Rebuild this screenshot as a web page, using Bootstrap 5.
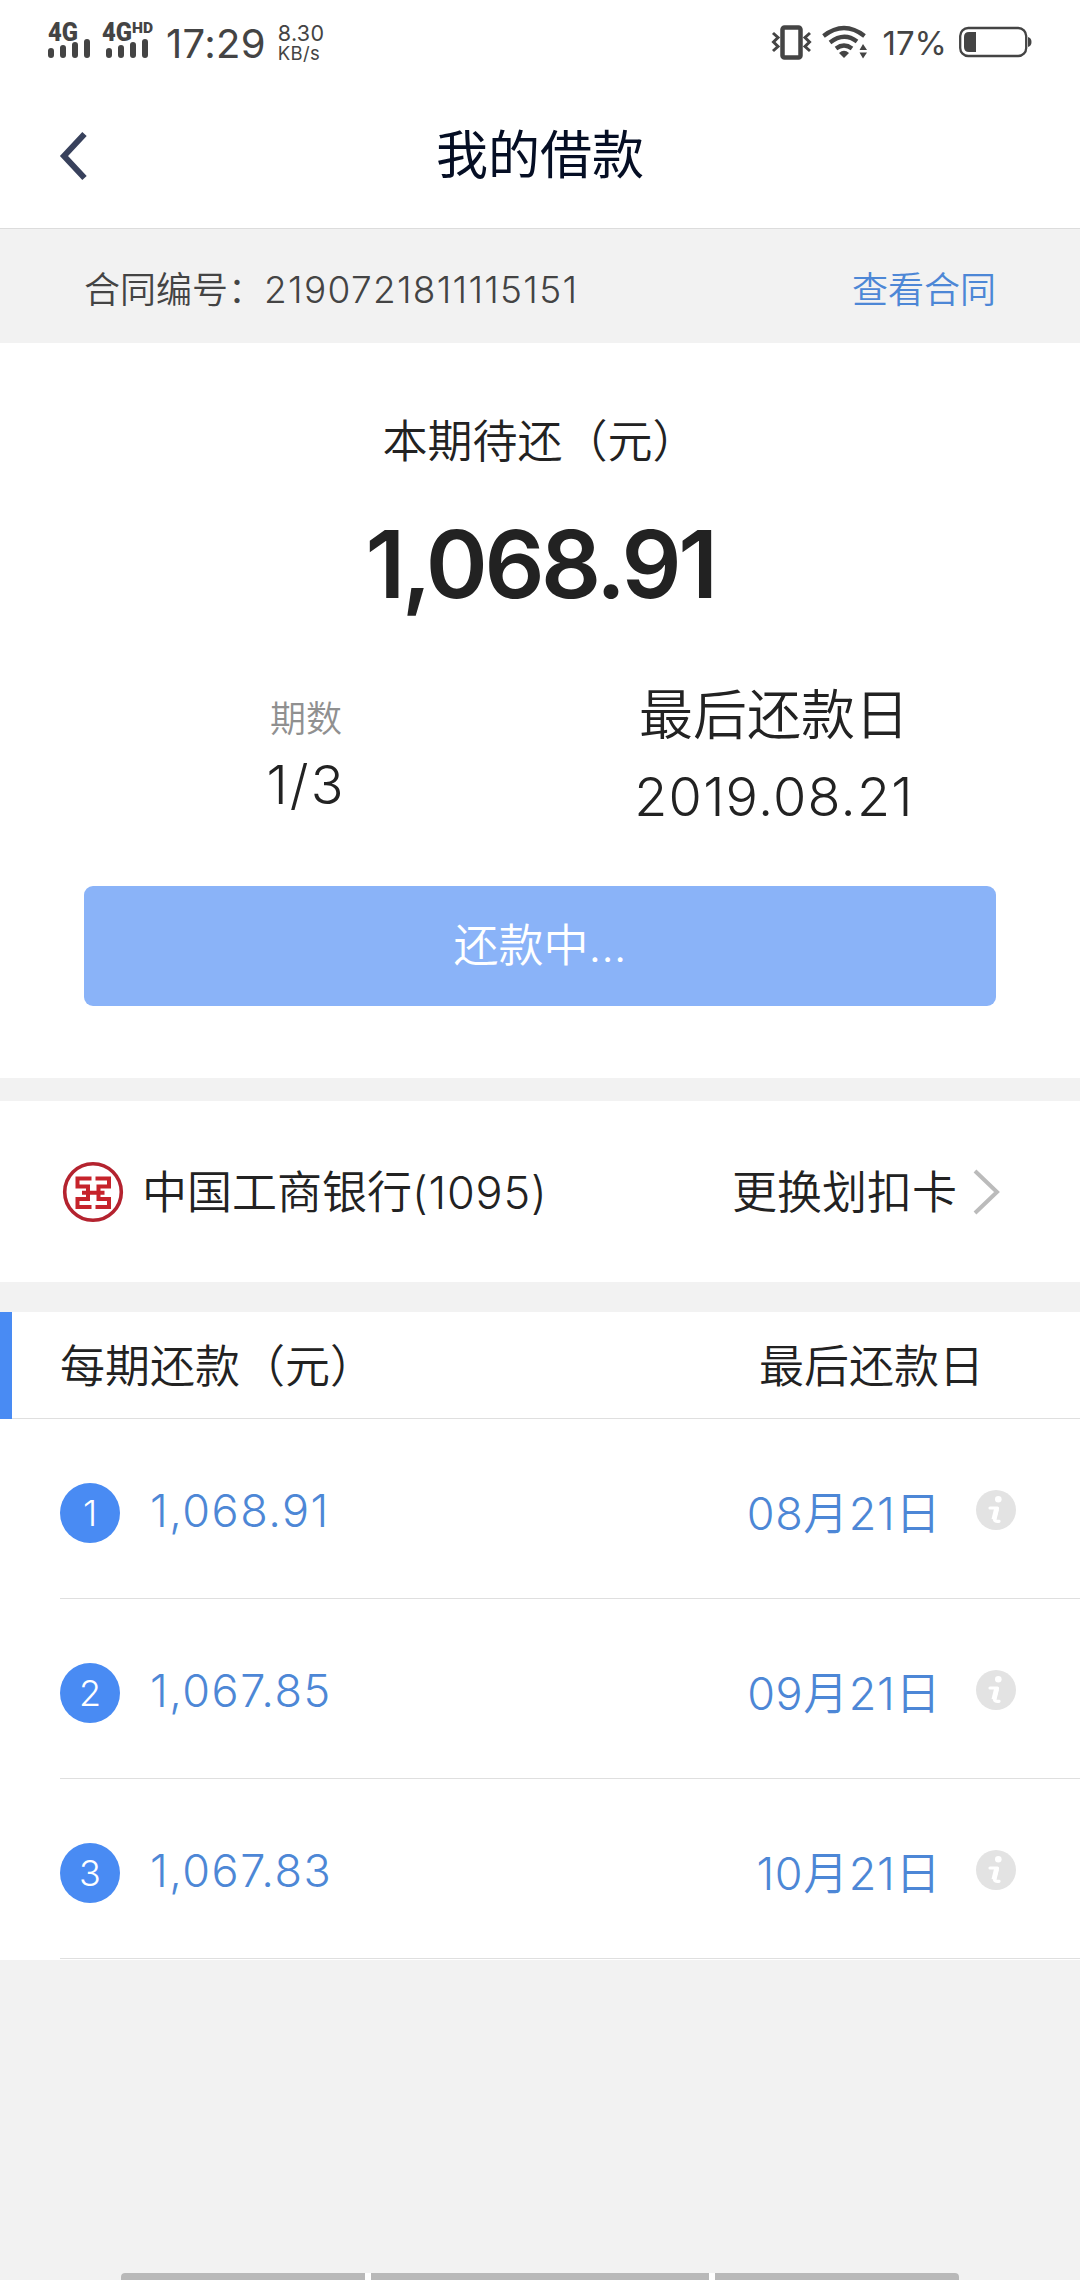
<!DOCTYPE html>
<html lang="zh-CN">
<head>
<meta charset="utf-8">
<meta name="viewport" content="width=device-width, initial-scale=1">
<title>我的借款</title>
<link href="https://cdn.jsdelivr.net/npm/bootstrap@5.3.0/dist/css/bootstrap.min.css" rel="stylesheet">
<style>
body{width:1080px;height:2280px;overflow:hidden;background:#f2f2f2;color:#222;font-family:Inter,"Noto Sans CJK SC",sans-serif;font-weight:350;line-height:1;white-space:nowrap}
svg{display:block;flex:none;overflow:visible}
.status{height:84px;color:#444;padding:23px 48px 0}
.sig{margin-right:12px}
.clock{font-size:40px;font-weight:400;line-height:44px;margin:-1px 0 0 -2px;letter-spacing:.3px}
.speed{font-size:21.5px;font-weight:400;line-height:20px;margin:0 0 0 12px;letter-spacing:.3px}
.speed small{font-size:18.5px;display:block}
.pct{font-size:33px;font-weight:400;line-height:40px;margin:0 11px 0 14px}
.titlebar{height:145px;border-bottom:1px solid #dcdcdc;padding:0 60px}
.titlebar h1{font-size:52px;font-weight:400;color:#050e24;line-height:60px}
.titlebar-end{width:28px}
.contract{height:114px;padding:7px 84px 0;font-size:36px;color:#444}
.contract-no{font-size:37px;letter-spacing:1.3px}
.accent{color:#4d87d6}
.due{height:735px;padding:76px 84px 0}
.due-label{font-size:45px;line-height:46px}
.due-sum{font-size:94px;line-height:96px;font-weight:600;letter-spacing:-3.4px;margin-top:51px}
.plan{margin:77px -24px 0 0;height:197px}
.term{width:444px;padding-top:8px}
.term-label{font-size:36px;line-height:44px;color:#909090;margin-bottom:17px}
.last{width:492px}
.last-date{margin-top:27px;letter-spacing:1.2px}
.f45{font-size:45px}.f54{font-size:54px}
.term .f54{letter-spacing:2px}
.pay{height:120px;border-radius:9px;background:#8ab3f8;color:#fff;font-size:45px;font-weight:350;border:0;padding:0}
.bank{height:181px;margin-top:23px;padding:1px 80px 0 62px}
.bank-name{margin-left:18px}
.bank-name span{letter-spacing:.8px}
.bank-change{margin-right:16px}
.plans{margin-top:30px;padding-bottom:1px}
.plans-head{height:107px;border-left:12px solid #498bf3}
.plans-head>div{height:107px;border-bottom:1px solid #dfdfdf;padding:2px 96px 0 48px;font-size:45px}
.item{height:180px;margin-left:60px;border-bottom:1px solid #dfdfdf;padding:8px 64px 0 0;font-size:45px}
.dot{width:60px;height:60px;background:#498bf3;color:#fff;border-radius:50%;font-size:36px}
.amount{margin:0 0 4px 30px;letter-spacing:1.5px}
.date{margin:1px 35px 0 0;letter-spacing:.6px}
.item svg{margin-bottom:6px}
.navbars{position:fixed;left:121px;bottom:0;width:838px;height:7px;background:#fff;gap:6px;border-radius:4px 4px 0 0;overflow:hidden}
.navbars i{background:#b9b9b9;height:7px}
.navbars i:nth-child(odd){width:244px}
</style>
</head>
<body>
<svg class="d-none">
<symbol id="info" viewBox="0 0 40 40"><circle cx="20" cy="20" r="20" fill="#e3e3e3"/><circle cx="22.300" cy="9.300" r="3.300" fill="#fff"/><path d="M14 18H21.500L18.500 28.500Q18 32 23 31.300" fill="none" stroke="#fff" stroke-width="3.200" stroke-linejoin="round" stroke-linecap="round"/><path d="M20.500 19L18 29.500" stroke="#fff" stroke-width="5"/></symbol>
</svg>
<header class="bg-white">
<div class="status d-flex">
<svg class="sig" width="42" height="37" viewBox="0 0 42 37"><text x="0" y="18" font-family="Roboto" font-weight="900" font-size="25" textLength="30" lengthAdjust="spacingAndGlyphs" fill="#444">4G</text><path d="M3 28V32M15 25V32M27 22V32M39 19V32" stroke="#444" stroke-width="6" stroke-linecap="round"/></svg>
<svg width="66" height="37" viewBox="0 0 66 37"><text x="0" y="18" font-family="Roboto" font-weight="900" font-size="25" textLength="30" lengthAdjust="spacingAndGlyphs" fill="#444">4G</text><text x="30" y="10" font-family="Roboto" font-weight="900" font-size="14" textLength="21" lengthAdjust="spacingAndGlyphs" fill="#444">HD</text><path d="M7 28V32M19 25V32M31 22V32M43 19V32" stroke="#444" stroke-width="6" stroke-linecap="round"/></svg>
<span class="clock">17:29</span>
<div class="speed">8.30<small>KB/s</small></div>
<div class="ms-auto d-flex">
<svg width="40" height="37" viewBox="0 0 40 37"><rect x="10.500" y="4.500" width="18" height="30" rx="2" fill="none" stroke="#444" stroke-width="4.500"/><path d="M1 10L6 14.500L1.500 19L6 23.500L1 28M38 10L33 14.500L37.500 19L33 23.500L38 28" fill="none" stroke="#444" stroke-width="3"/></svg>
<svg class="ms-2" width="48" height="37" viewBox="0 0 48 37"><g fill="none" stroke="#444" stroke-width="4.200"><path d="M3.500 13Q24 -3 44.500 13"/><path d="M10 19.500Q24 8.500 37 18.500"/><path d="M16 25.500Q24 19.500 32 25.500"/></g><path d="M19 30Q24 25.500 29 30L24 35Z" fill="#444"/><path d="M39.500 27L43 21L47 27ZM39.500 29.500H47L43 35.500Z" fill="#444"/></svg>
<span class="pct">17%</span>
<svg width="74" height="37" viewBox="0 0 74 37"><rect x="2.200" y="5" width="66" height="28" rx="8" fill="none" stroke="#444" stroke-width="2.300"/><path d="M11 9H18V29H11Q6 29 6 24V14Q6 9 11 9Z" fill="#444"/><path d="M70 14Q73.500 15 73.500 19T70 24Z" fill="#444"/></svg>
</div>
</div>
<div class="titlebar d-flex align-items-center justify-content-between">
<svg width="28" height="48" viewBox="0 0 28 48"><path d="M24.500 2L4 24L24.500 46" fill="none" stroke="#38415c" stroke-width="6"/></svg>
<h1 class="m-0">我的借款</h1>
<span class="titlebar-end"></span>
</div>
</header>
<section class="contract d-flex justify-content-between align-items-center"><div class="d-flex align-items-center"><span>合同编号：</span><span class="contract-no">2190721811115151</span></div><a class="accent text-decoration-none">查看合同</a></section>
<section class="due bg-white text-center">
<div class="due-label">本期待还（元）</div>
<div class="due-sum">1,068.91</div>
<div class="plan d-flex">
<div class="term"><div class="term-label">期数</div><div class="f54">1/3</div></div>
<div class="last f54"><div>最后还款日</div><div class="last-date">2019.08.21</div></div>
</div>
<button class="pay btn w-100 d-block">还款中...</button>
</section>
<section class="bank bg-white d-flex align-items-center f45">
<svg width="62" height="62" viewBox="0 0 62 62"><circle cx="31" cy="31" r="28.300" fill="none" stroke="#b4232f" stroke-width="3.600"/><g fill="none" stroke="#c6232b" stroke-width="4"><path d="M29.500 17.500H15.500V25.500H26V38H15.500V46H29.500M33.500 17.500H47V25.500H36.500V38H47V46H33.500M20 31.700H42.500"/></g></svg>
<div class="bank-name">中国工商银行<span>(1095)</span></div>
<div class="bank-change ms-auto">更换划扣卡</div>
<svg width="27" height="46" viewBox="0 0 27 46"><path d="M2 2L24 23L2 44" fill="none" stroke="#bbb" stroke-width="4"/></svg>
</section>
<section class="plans bg-white">
<div class="plans-head"><div class="d-flex justify-content-between align-items-center"><span>每期还款（元）</span><span>最后还款日</span></div></div>
<div class="item d-flex align-items-center accent"><span class="dot d-flex align-items-center justify-content-center">1</span><span class="amount">1,068.91</span><span class="date ms-auto">08月21日</span><svg width="40" height="40"><use href="#info"/></svg></div>
<div class="item d-flex align-items-center accent"><span class="dot d-flex align-items-center justify-content-center">2</span><span class="amount">1,067.85</span><span class="date ms-auto">09月21日</span><svg width="40" height="40"><use href="#info"/></svg></div>
<div class="item d-flex align-items-center accent"><span class="dot d-flex align-items-center justify-content-center">3</span><span class="amount">1,067.83</span><span class="date ms-auto">10月21日</span><svg width="40" height="40"><use href="#info"/></svg></div>
</section>
<div class="navbars d-flex"><i></i><i class="flex-grow-1"></i><i></i></div>
<script src="https://cdn.jsdelivr.net/npm/bootstrap@5.3.0/dist/js/bootstrap.bundle.min.js"></script>
</body>
</html>
